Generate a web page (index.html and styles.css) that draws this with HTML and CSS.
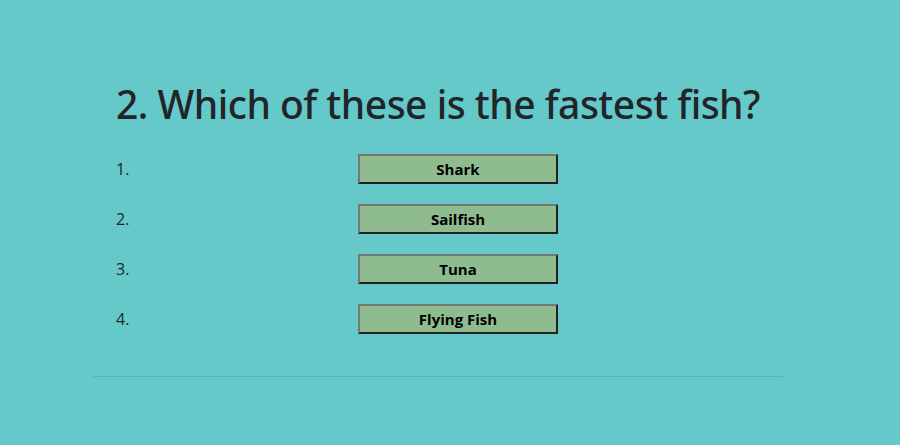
FILE: index.html
```html
<!DOCTYPE html>
<html lang="en">
<head>
<meta charset="utf-8">
<title>Quiz</title>
<link rel="stylesheet" href="styles.css">
</head>
<body>
<main class="quiz">
  <h1 class="question">2. Which of these is the fastest fish?</h1>
  <ol class="answers">
    <li class="answer"><span class="num">1.</span><button class="choice">Shark</button></li>
    <li class="answer"><span class="num">2.</span><button class="choice">Sailfish</button></li>
    <li class="answer"><span class="num">3.</span><button class="choice">Tuna</button></li>
    <li class="answer"><span class="num">4.</span><button class="choice">Flying Fish</button></li>
  </ol>
  <hr class="divider">
</main>
</body>
</html>
```
FILE: styles.css
```css
html, body {
  margin: 0;
  padding: 0;
  background: #66c9c9;
  font-family: "Open Sans", "Noto Sans", sans-serif;
  color: #212529;
}
.quiz {
  width: 690px;
  margin-left: 93px;
  padding-top: 80px;
}
.question {
  margin: 0 0 26px 23px;
  font-family: "Noto Sans", "Open Sans", sans-serif;
  font-size: 39px;
  font-weight: 500;
  line-height: 48px;
  letter-spacing: -0.5px;
}
.answers {
  list-style: none;
  margin: 0;
  padding: 0 0 0 23px;
  display: flex;
  flex-direction: column;
  gap: 20px;
}
.answer {
  display: flex;
  align-items: center;
  height: 30px;
}
.num {
  width: 242px;
  font-size: 16px;
}
.choice {
  width: 200px;
  height: 30px;
  box-sizing: border-box;
  background: #8fbc8f;
  border: 2px solid;
  border-color: #767676 #222 #222 #767676;
  font-family: inherit;
  font-weight: 700;
  font-size: 15px;
  color: #000;
  padding: 0;
}
.divider {
  margin: 42px 0 0;
  border: 0;
  border-top: 1px solid rgba(0,0,0,0.1);
}
```
